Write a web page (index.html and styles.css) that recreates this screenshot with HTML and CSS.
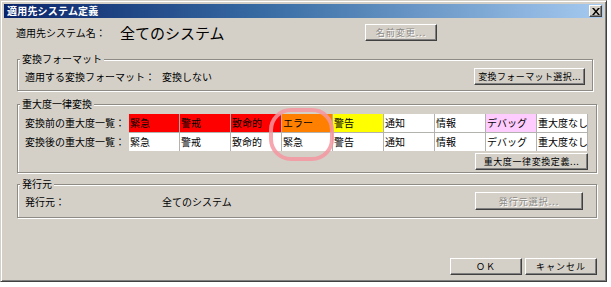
FILE: index.html
```html
<!DOCTYPE html>
<html lang="ja">
<head>
<meta charset="utf-8">
<title>適用先システム定義</title>
<link rel="stylesheet" href="styles.css">
</head>
<body>
<div class="window">
  <div class="titlebar">
    <span class="title">適用先システム定義</span>
    <span class="close"><svg width="8" height="7" viewBox="0 0 8 7"><path d="M0 0h2l2 2.5L6 0h2L5 3.5 8 7H6L4 4.5 2 7H0l3-3.5z" fill="#000"/></svg></span>
  </div>
  <div class="content">
    <div class="name-row">
      <span class="name-label">適用先システム名：</span>
      <span class="sysname">全てのシステム</span>
      <button class="btn disabled btn-rename">名前変更...</button>
    </div>

    <div class="group group-format">
      <span class="legend">変換フォーマット</span>
      <div class="row row-format">
        <span class="field-label">適用する変換フォーマット：</span>
        <span class="field-value">変換しない</span>
        <button class="btn btn-right btn-format">変換フォーマット選択...</button>
      </div>
    </div>

    <div class="group group-severity">
      <span class="legend">重大度一律変換</span>
      <div class="sev-table">
        <div class="sev-labels">
          <span class="sev-label">変換前の重大度一覧：</span>
          <span class="sev-label">変換後の重大度一覧：</span>
        </div>
        <div class="sev-grid">
          <span class="cell red">緊急</span>
          <span class="cell red">警戒</span>
          <span class="cell red">致命的</span>
          <span class="cell orange">エラー</span>
          <span class="cell yellow">警告</span>
          <span class="cell">通知</span>
          <span class="cell">情報</span>
          <span class="cell pink">デバッグ</span>
          <span class="cell">重大度なし</span>
          <span class="cell">緊急</span>
          <span class="cell">警戒</span>
          <span class="cell">致命的</span>
          <span class="cell">緊急</span>
          <span class="cell">警告</span>
          <span class="cell">通知</span>
          <span class="cell">情報</span>
          <span class="cell">デバッグ</span>
          <span class="cell">重大度なし</span>
        </div>
      </div>
      <div class="row row-sevbtn">
        <button class="btn btn-right btn-sev">重大度一律変換定義...</button>
      </div>
      <span class="highlight"></span>
    </div>

    <div class="group group-issuer">
      <span class="legend">発行元</span>
      <div class="row row-issuer">
        <span class="field-label">発行元：</span>
        <span class="field-value">全てのシステム</span>
        <button class="btn disabled btn-right btn-issuer">発行元選択...</button>
      </div>
    </div>

    <div class="footer">
      <button class="btn btn-footer">ＯＫ</button>
      <button class="btn btn-footer">キャンセル</button>
    </div>
  </div>
</div>
</body>
</html>
```

FILE: styles.css
```css
* { box-sizing: border-box; }

html, body {
  margin: 0;
  padding: 0;
  background: #ffffff;
  font-family: "Noto Sans CJK JP", "Noto Sans", sans-serif;
  font-size: 10px;
  color: #000;
}

.window {
  width: 607px;
  height: 282px;
  background: #d4d0c8;
  border: 1px solid;
  border-color: #d4d0c8 #404040 #404040 #d4d0c8;
  box-shadow: inset 1px 1px 0 #ffffff, inset -1px -1px 0 #808080;
  padding: 3px;
  display: flex;
  flex-direction: column;
}

.titlebar {
  height: 14px;
  background: linear-gradient(to right, #0a246a 0%, #3a6ea5 45%, #a6caf0 100%);
  display: flex;
  align-items: center;
  justify-content: space-between;
  padding: 0 1px 0 3px;
}

.title {
  color: #ffffff;
  font-weight: bold;
  font-size: 10px;
  line-height: 14px;
  letter-spacing: 0.2px;
}

.close {
  width: 13px;
  height: 12px;
  background: #d4d0c8;
  border: 1px solid;
  border-color: #ffffff #404040 #404040 #ffffff;
  box-shadow: inset -1px -1px 0 #808080;
  display: flex;
  align-items: center;
  justify-content: center;
}

.content {
  flex: 1;
  display: flex;
  flex-direction: column;
}

.name-row {
  display: flex;
  align-items: center;
  height: 17px;
  margin: 6px 0 0 12px;
}

.name-label {
  width: 104px;
  font-size: 10px;
}

.sysname {
  width: 245px;
  font-size: 15px;
  line-height: 17px;
}

.btn {
  font-family: "Noto Sans CJK JP", "Noto Sans", sans-serif;
  font-size: 9px;
  letter-spacing: 1px;
  white-space: nowrap;
  height: 17px;
  padding: 0;
  margin: 0;
  background: #d4d0c8;
  color: #000;
  border: 1px solid;
  border-color: #ffffff #404040 #404040 #ffffff;
  box-shadow: inset -1px -1px 0 #808080;
  display: flex;
  align-items: center;
  justify-content: center;
  line-height: 1;
  overflow: hidden;
}

.btn.disabled {
  color: #8c8a86;
  text-shadow: 1px 1px 0 #ffffff;
}

.btn-rename { width: 72px; }

.group {
  position: relative;
  border: 1px solid #8e8b85;
  box-shadow: inset 1px 1px 0 #ffffff, 1px 1px 0 #ffffff;
  display: flex;
  flex-direction: column;
  padding: 0 0 0 7px;
}

.legend {
  align-self: flex-start;
  margin: -7px 0 0 -5px;
  padding: 0 2px;
  line-height: 12px;
  height: 12px;
  background: #d4d0c8;
}

.row {
  display: flex;
  align-items: center;
}

.field-label { width: 137px; }
.field-value { flex: 1; }

.btn-right { width: 111px; }
.btn-format { letter-spacing: 0.4px; }

.group-format {
  margin: 18px 10px 0 13px;
  padding-bottom: 5px;
  padding-right: 7px;
}

.row-format {
  margin-top: 3px;
  height: 17px;
}

.group-severity {
  margin: 13px 6px 0 13px;
  padding-bottom: 2px;
  padding-right: 8px;
}

.sev-table {
  display: flex;
  margin-top: 4px;
}

.sev-labels {
  width: 104px;
  display: flex;
  flex-direction: column;
  gap: 1px;
}

.sev-label {
  height: 18px;
  line-height: 18px;
}

.sev-grid {
  display: grid;
  grid-template-columns: repeat(9, 50px);
  grid-auto-rows: 18px;
  gap: 1px;
  background: #b4b2ae;
  border-right: 1px solid #b4b2ae;
}

.cell {
  background: #ffffff;
  line-height: 18px;
  padding-left: 1px;
  white-space: nowrap;
  overflow: hidden;
}

.cell.red { background: #ff0000; }
.cell.orange { background: #ff8000; }
.cell.yellow { background: #ffff00; }
.cell.pink { background: #ffccff; }

.row-sevbtn {
  justify-content: flex-end;
  margin-top: 2px;
  height: 17px;
}

.btn-sev { width: 113px; letter-spacing: 0.6px; }

.highlight {
  position: absolute;
  left: 251px;
  top: 3px;
  width: 65px;
  height: 53px;
  border: 4px solid rgba(244, 150, 160, 0.85);
  border-radius: 22px;
  pointer-events: none;
}

.group-issuer {
  margin: 11px 6px 0 13px;
  padding-bottom: 7px;
  padding-right: 13px;
}

.row-issuer {
  margin-top: 2px;
  height: 18px;
}

.btn-issuer { width: 108px; height: 18px; }

.footer {
  display: flex;
  justify-content: flex-end;
  gap: 3px;
  margin: 40px 6px 0 0;
}

.btn-footer { width: 72px; }
```
